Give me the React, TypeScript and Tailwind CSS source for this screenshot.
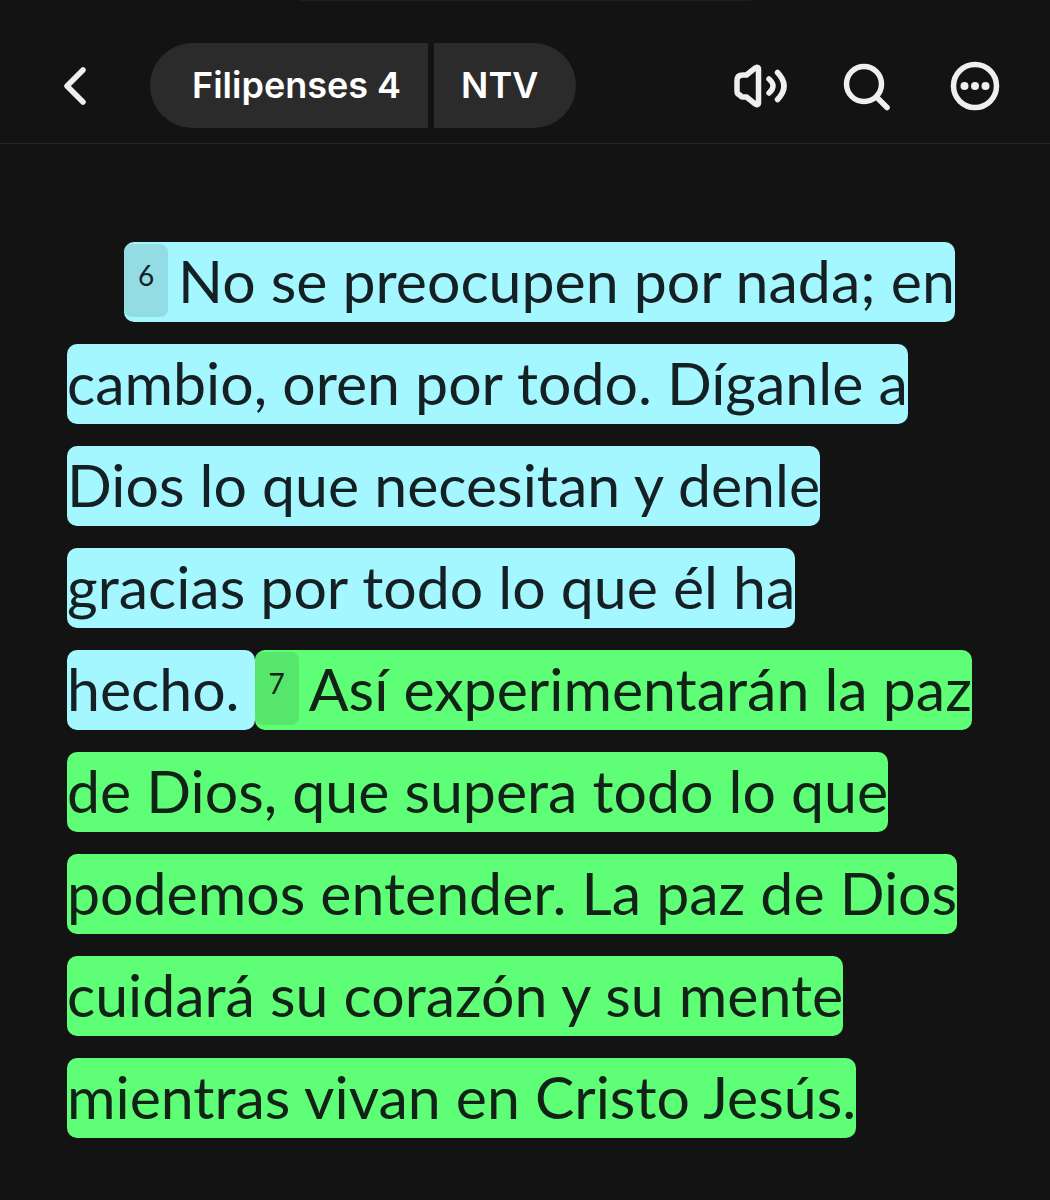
import React from 'react';

const verses = [
    {
        number: 6,
        box: 'bg-[#a5f7ff] text-[#152024]',
        badge: 'bg-[#93dce3]',
        lines: ['No se preocupen por nada; en', 'cambio, oren por todo. Díganle a', 'Dios lo que necesitan y denle', 'gracias por todo lo que él ha', 'hecho. '],
    },
    {
        number: 7,
        box: 'bg-[#5eff77] text-[#132216]',
        badge: 'bg-[#55e66b]',
        lines: ['Así experimentarán la paz', 'de Dios, que supera todo lo que', 'podemos entender. La paz de Dios', 'cuidará su corazón y su mente', 'mientras vivan en Cristo Jesús.'],
    },
];

function Header() {
    return (
        <header className="flex items-center justify-between border-b border-[#262626] pt-[42px] pb-[15px] pr-[50px] pl-[62px]">
            <div className="flex items-center">
                <button type="button" aria-label="Volver" className="mr-[62px]">
                    <svg width="26" height="42" viewBox="0 0 26 42" fill="none" stroke="#efefed" strokeWidth="5.500" strokeLinecap="round" strokeLinejoin="round">
                        <path d="M21 5 5 21l16 16" />
                    </svg>
                </button>
                <div className="flex gap-[6px] text-[36px] leading-[85px] font-semibold text-white">
                    <button type="button" className="rounded-l-full bg-[#2b2b2b] pr-[27px] pl-[42px]">Filipenses 4</button>
                    <button type="button" className="rounded-r-full bg-[#2b2b2b] pr-[38px] pl-[27px]">NTV</button>
                </div>
            </div>

            <div className="flex items-center gap-14">
                <button type="button" aria-label="Escuchar">
                    <svg width="54" height="44" viewBox="0 0 54 44" fill="none" stroke="#efefef" strokeWidth="5.500" strokeLinecap="round" strokeLinejoin="round">
                        <path d="M13.500 11H10q-6 0-6 5.500V27q0 3.500 3 4 1 2 3 2h3.500l8.500 6.800c1.800 1.500 3.500 1 3.500-1V5.200c0-2-1.700-2.500-3.500-1Z" />
                        <path d="M36 15q8 7 0 14" />
                        <path d="M44.500 8.500q13 13.500 0 27" />
                    </svg>
                </button>
                <button type="button" aria-label="Buscar">
                    <svg width="51" height="50" viewBox="0 0 51 50" fill="none" stroke="#efefef" strokeWidth="5.500" strokeLinecap="round">
                        <circle cx="21" cy="23" r="17.500" />
                        <path d="m34 36.500 10 10" />
                    </svg>
                </button>
                <button type="button" aria-label="Más opciones">
                    <svg width="50" height="50" viewBox="0 0 50 50" fill="none">
                        <circle cx="25" cy="25" r="21.500" stroke="#efefef" strokeWidth="5.500" />
                        <g fill="#efefef">
                            <circle cx="14.500" cy="25" r="4" />
                            <circle cx="25" cy="25" r="4" />
                            <circle cx="35.500" cy="25" r="4" />
                        </g>
                    </svg>
                </button>
            </div>
        </header>
    );
}

export default function App() {
    return (
        <div className="min-h-screen bg-[#131313] font-['Inter',sans-serif]">
            <div className="mx-auto h-px w-[43%] rounded-full bg-[#1f1f1f]" />
            <Header />
            <main className="pt-[86px] pb-12 pl-[67px]">
                <p className="indent-[57px] font-['Lato',sans-serif] text-[59px] leading-[102px] font-normal whitespace-pre">
                    {verses.map((verse) => (
                        <span key={verse.number} className={`rounded-[10px] box-decoration-clone pt-[3px] pb-[6px] ${verse.box}`}>
                            <span className={`mr-2.5 inline-flex h-[73px] w-11 justify-center rounded-lg indent-0 align-[17px] text-[28px] leading-[62px] ${verse.badge}`}>{verse.number}</span>
                            {verse.lines.map((line, i) => (
                                <React.Fragment key={line}>
                                    {i > 0 && <br />}
                                    {line}
                                </React.Fragment>
                            ))}
                        </span>
                    ))}
                </p>
            </main>
        </div>
    );
}
